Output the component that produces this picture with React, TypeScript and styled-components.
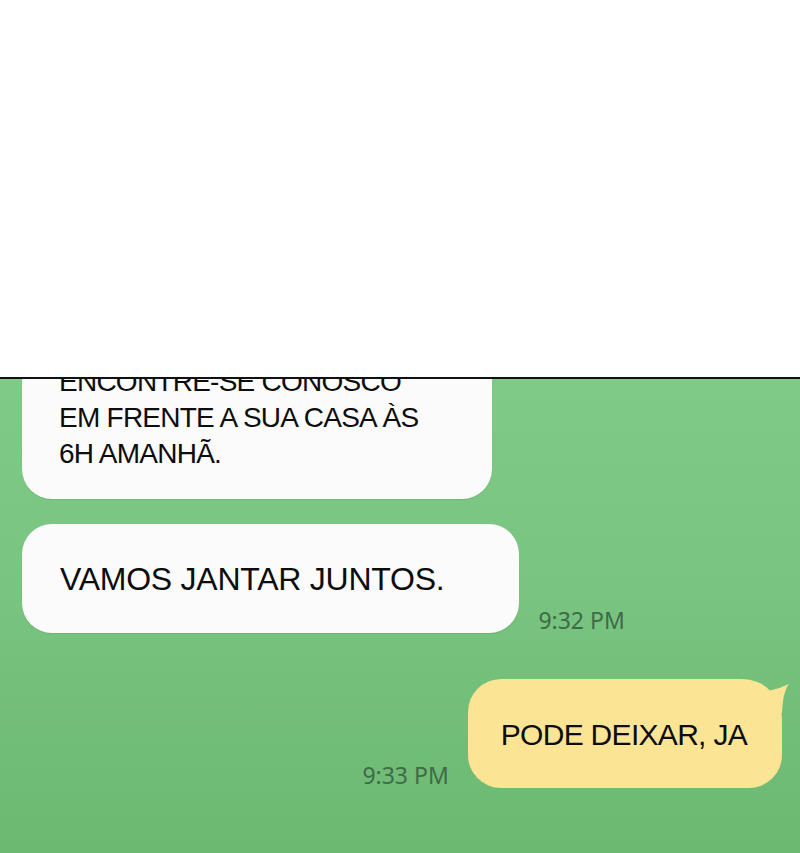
import React from 'react';
import styled, { createGlobalStyle } from 'styled-components';

const GlobalStyle = createGlobalStyle`
  html, body {
    margin: 0;
    padding: 0;
    background: #ffffff;
  }
  body {
    font-family: 'Liberation Sans', Arial, sans-serif;
  }
`;

const Page = styled.div`
  width: 800px;
  height: 853px;
  display: flex;
  flex-direction: column;
  overflow: hidden;
`;

const Blank = styled.div`
  height: 377px;
  flex-shrink: 0;
  background: #ffffff;
  border-bottom: 2px solid #111111;
`;

const Chat = styled.div`
  flex: 1;
  overflow: hidden;
  padding: 0 18px 0 22px;
  display: flex;
  flex-direction: column;
  background: linear-gradient(180deg, #7fca87 0%, #78c480 45%, #6cb972 100%);
`;

const Row = styled.div<{ $out?: boolean; $top?: number }>`
  display: flex;
  align-items: flex-end;
  justify-content: ${(p) => (p.$out ? 'flex-end' : 'flex-start')};
  gap: 19px;
  margin-top: ${(p) => p.$top ?? 0}px;
`;

const Bubble = styled.div<{ $out?: boolean; $size: number; $spacing: number }>`
  position: relative;
  box-sizing: border-box;
  background: ${(p) => (p.$out ? '#fbe594' : '#fbfbfb')};
  color: #0d0d0d;
  font-size: ${(p) => p.$size}px;
  line-height: ${(p) => (p.$size < 30 ? 36 : 40)}px;
  letter-spacing: ${(p) => p.$spacing}px;
  white-space: nowrap;
  border-radius: ${(p) => (p.$out ? '33px 40px 33px 33px' : '30px')};
  box-shadow: ${(p) => (p.$out ? 'none' : '0 1px 1px rgba(0, 0, 0, 0.08)')};
`;

const Stamp = styled.span`
  font-family: 'Noto Sans', 'Open Sans', sans-serif;
  font-size: 23px;
  line-height: 22px;
  color: #3f6b47;
  margin-bottom: 2px;
  white-space: nowrap;
`;

const Tail = styled.svg`
  position: absolute;
  top: 0;
  right: -10px;
  width: 40px;
  height: 40px;
  overflow: visible;
`;

export default function App() {
  return (
    <>
      <GlobalStyle />
      <Page>
        <Blank />
        <Chat>
          <Row $top={-42}>
            <Bubble $size={28} $spacing={-0.75} style={{ padding: '27px 74px 27px 37px' }}>
              ENCONTRE-SE CONOSCO
              <br />
              EM FRENTE A SUA CASA ÀS
              <br />
              6H AMANHÃ.
            </Bubble>
          </Row>
          <Row $top={25}>
            <Bubble $size={32} $spacing={-0.25} style={{ padding: '35px 75px 34px 38px' }}>
              VAMOS JANTAR JUNTOS.
            </Bubble>
            <Stamp>9:32 PM</Stamp>
          </Row>
          <Row $out $top={46}>
            <Stamp>9:33 PM</Stamp>
            <Bubble $out $size={30} $spacing={-0.7} style={{ padding: '36px 35px 33px 33px' }}>
              PODE DEIXAR, JA
              <Tail viewBox="0 0 40 40">
                <path d="M14 18 L18 11.5 Q28 9.5 37 5 Q31 12 30 34 L14 34 Z" fill="#fbe594" />
              </Tail>
            </Bubble>
          </Row>
        </Chat>
      </Page>
    </>
  );
}
